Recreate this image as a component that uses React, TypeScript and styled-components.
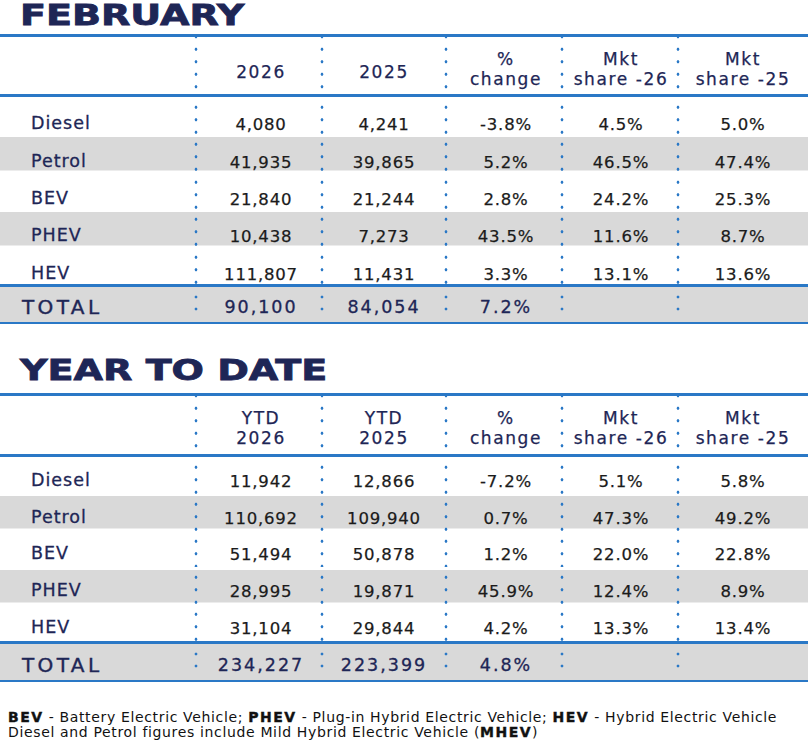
import React from 'react';
import styled, { createGlobalStyle, css } from 'styled-components';

const GlobalStyle = createGlobalStyle`
  html, body {
    margin: 0;
    padding: 0;
    background: #ffffff;
    overflow: hidden;
  }
  body {
    font-family: "DejaVu Sans", "Liberation Sans", sans-serif;
    color: #1f2754;
  }
`;

const BLUE = '#2a78c6';
const NAVY = '#1e2656';
const GRAY = '#d9d9d9';
const COLS = '194px 126px 124px 116px 116px 1fr';

// one dot column drawn on the left edge of a cell
const dots = css`
  background-image: radial-gradient(circle at 2px 6.25px, ${BLUE} 1.2px, transparent 1.7px);
  background-size: 4px 12.5px;
  background-repeat: repeat-y;
  background-position: 0 0;
`;

const Page = styled.div`
  width: 808px;
  padding-top: 2px;
`;

const Title = styled.h2<{ $gap: number; $top?: number }>`
  width: fit-content;
  margin: ${p => p.$top ?? 0}px 0 ${p => p.$gap}px 20px;
  font-family: "DejaVu Sans", sans-serif;
  font-weight: 700;
  font-size: 28px;
  line-height: 28px;
  color: ${NAVY};
  -webkit-text-stroke: 0.8px ${NAVY};
  transform: scaleX(1.36);
  transform-origin: left center;
  white-space: nowrap;
`;

const Table = styled.section`
  border-top: 3px solid ${BLUE};
`;

const HeadRow = styled.div<{ $h: number }>`
  display: grid;
  grid-template-columns: ${COLS};
  height: ${p => p.$h}px;
  border-bottom: 3px solid ${BLUE};
`;

const HeadCell = styled.div<{ $shift: number; $single: boolean }>`
  ${dots}
  background-position: 0 6px;
  display: flex;
  align-items: center;
  justify-content: center;
  padding: ${p => (p.$single ? 13 : 7)}px 0 0 ${p => p.$shift}px;
  text-align: center;
  font-size: 17px;
  line-height: 20px;
  letter-spacing: 1.6px;
  color: ${NAVY};
  -webkit-text-stroke: 0.25px ${NAVY};
`;

const Row = styled.div<{ $h: number; $striped?: boolean }>`
  display: grid;
  grid-template-columns: ${COLS};
  height: ${p => p.$h}px;
  ${p =>
    p.$striped &&
    css`
      background: linear-gradient(${GRAY}, ${GRAY}) 0 2.5px / 100% calc(100% - 4.5px) no-repeat;
    `}
`;

const Label = styled.div<{ $pad: number }>`
  display: flex;
  align-items: center;
  padding: ${p => p.$pad}px 0 0 31px;
  font-size: 17.5px;
  letter-spacing: 1px;
  color: ${NAVY};
  -webkit-text-stroke: 0.3px ${NAVY};
`;

const Value = styled.div<{ $shift: number; $pad: number }>`
  ${dots}
  background-position: 0 4px;
  display: flex;
  align-items: center;
  justify-content: center;
  padding: ${p => p.$pad}px 0 0 ${p => p.$shift}px;
  font-size: 16.5px;
  letter-spacing: 0.8px;
  color: #1b1b1b;
  -webkit-text-stroke: 0.25px #1b1b1b;
`;

const TotalRow = styled.div<{ $h: number }>`
  display: grid;
  grid-template-columns: ${COLS};
  height: ${p => p.$h}px;
  background: ${GRAY};
  border-top: 3px solid ${BLUE};
  border-bottom: 2px solid ${BLUE};
`;

const TotalLabel = styled.div`
  display: flex;
  align-items: center;
  padding: 6px 0 0 22px;
  font-size: 20px;
  letter-spacing: 3.4px;
  color: ${NAVY};
  -webkit-text-stroke: 0.4px ${NAVY};
`;

const TotalValue = styled.div<{ $shift: number }>`
  background:
    radial-gradient(circle at 2px 2px, ${BLUE} 1.2px, transparent 1.7px) 0 8px / 4px 4px no-repeat,
    radial-gradient(circle at 2px 2px, ${BLUE} 1.2px, transparent 1.7px) 0 20px / 4px 4px no-repeat;
  display: flex;
  align-items: center;
  justify-content: center;
  padding: 6px 0 0 ${p => p.$shift}px;
  font-size: 17.5px;
  letter-spacing: 2px;
  color: ${NAVY};
  -webkit-text-stroke: 0.3px ${NAVY};
`;

const Note = styled.p`
  margin: 28px 0 0 8px;
  font-size: 14px;
  line-height: 15.5px;
  letter-spacing: 0.65px;
  color: #111;
  white-space: nowrap;
`;

const Abbr = styled.b`
  font-weight: 700;
  letter-spacing: 1.5px;
  -webkit-text-stroke: 0.4px #111;
`;

type Line = [string, string, string, string, string, string];

type TableData = {
  title: string;
  head: string[][];
  headH: number;
  rowH: number;
  rowPad: number;
  rows: Line[];
  total: [string, string, string, string];
  totalH: number;
};

const SHIFT = [0, 8, 4, 8, 6, 2];

const february: TableData = {
  title: 'FEBRUARY',
  head: [['2026'], ['2025'], ['%', 'change'], ['Mkt', 'share -26'], ['Mkt', 'share -25']],
  headH: 57,
  rowH: 37.4,
  rowPad: 15,
  rows: [
    ['Diesel', '4,080', '4,241', '-3.8%', '4.5%', '5.0%'],
    ['Petrol', '41,935', '39,865', '5.2%', '46.5%', '47.4%'],
    ['BEV', '21,840', '21,244', '2.8%', '24.2%', '25.3%'],
    ['PHEV', '10,438', '7,273', '43.5%', '11.6%', '8.7%'],
    ['HEV', '111,807', '11,431', '3.3%', '13.1%', '13.6%'],
  ],
  total: ['TOTAL', '90,100', '84,054', '7.2%'],
  totalH: 35,
};

const ytd: TableData = {
  title: 'YEAR TO DATE',
  head: [['YTD', '2026'], ['YTD', '2025'], ['%', 'change'], ['Mkt', 'share -26'], ['Mkt', 'share -25']],
  headH: 58,
  rowH: 36.8,
  rowPad: 9,
  rows: [
    ['Diesel', '11,942', '12,866', '-7.2%', '5.1%', '5.8%'],
    ['Petrol', '110,692', '109,940', '0.7%', '47.3%', '49.2%'],
    ['BEV', '51,494', '50,878', '1.2%', '22.0%', '22.8%'],
    ['PHEV', '28,995', '19,871', '45.9%', '12.4%', '8.9%'],
    ['HEV', '31,104', '29,844', '4.2%', '13.3%', '13.4%'],
  ],
  total: ['TOTAL', '234,227', '223,399', '4.8%'],
  totalH: 36,
};

const SalesTable: React.FC<{ data: TableData }> = ({ data }) => (
  <Table>
    <HeadRow $h={data.headH}>
      <div />
      {data.head.map((lines, i) => (
        <HeadCell key={i} $shift={SHIFT[i + 1]} $single={lines.length === 1}>
          <div>
            {lines.map(l => (
              <div key={l}>{l}</div>
            ))}
          </div>
        </HeadCell>
      ))}
    </HeadRow>
    {data.rows.map((row, r) => (
      <Row key={row[0]} $h={data.rowH} $striped={r % 2 === 1}>
        <Label $pad={data.rowPad}>{row[0]}</Label>
        {row.slice(1).map((v, i) => (
          <Value key={i} $shift={SHIFT[i + 1]} $pad={data.rowPad + 3}>
            {v}
          </Value>
        ))}
      </Row>
    ))}
    <TotalRow $h={data.totalH}>
      <TotalLabel>{data.total[0]}</TotalLabel>
      {[data.total[1], data.total[2], data.total[3], '', ''].map((v, i) => (
        <TotalValue key={i} $shift={SHIFT[i + 1]}>
          {v}
        </TotalValue>
      ))}
    </TotalRow>
  </Table>
);

export default function App() {
  return (
    <Page>
      <GlobalStyle />
      <Title $gap={4}>{february.title}</Title>
      <SalesTable data={february} />
      <Title $gap={8} $top={33}>
        {ytd.title}
      </Title>
      <SalesTable data={ytd} />
      <Note>
        <Abbr>BEV</Abbr> - Battery Electric Vehicle; <Abbr>PHEV</Abbr> - Plug-in Hybrid Electric
        Vehicle; <Abbr>HEV</Abbr> - Hybrid Electric Vehicle
        <br />
        Diesel and Petrol figures include Mild Hybrid Electric Vehicle (<Abbr>MHEV</Abbr>)
      </Note>
    </Page>
  );
}
